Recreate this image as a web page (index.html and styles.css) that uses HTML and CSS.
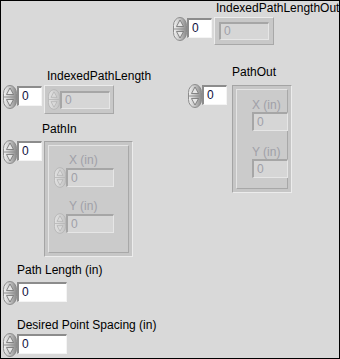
FILE: index.html
```html
<!DOCTYPE html>
<html lang="en">
<head>
  <meta charset="UTF-8">
  <title>Path Panel</title>
  <link rel="stylesheet" href="styles.css">
</head>
<body>

  <!-- Front panel canvas: each control sits where it was dropped -->
  <div class="panel">

    <!-- IndexedPathLengthOut (indicator array) -->
    <div class="ctl ctl-out-len">
      <div class="label">IndexedPathLengthOut</div>
      <div class="row">
        <svg class="spin" viewBox="0 0 14 24"><use href="#spin"/></svg>
        <div class="num idx">0</div>
        <div class="array arr-out-len">
          <div class="field dim">0</div>
        </div>
      </div>
    </div>

    <!-- IndexedPathLength (control array) -->
    <div class="ctl ctl-in-len">
      <div class="label">IndexedPathLength</div>
      <div class="row">
        <svg class="spin" viewBox="0 0 14 24"><use href="#spin"/></svg>
        <div class="num idx">0</div>
        <div class="array arr-in-len">
          <svg class="spin small dim-spin" viewBox="0 0 14 24"><use href="#spin-dim"/></svg>
          <div class="field dim">0</div>
        </div>
      </div>
    </div>

    <!-- PathOut (indicator cluster array) -->
    <div class="ctl ctl-path-out">
      <div class="label">PathOut</div>
      <div class="row">
        <svg class="spin" viewBox="0 0 14 24"><use href="#spin"/></svg>
        <div class="num idx">0</div>
        <div class="cluster clu-out">
          <div class="inner">
            <div class="sub-label">X (in)</div>
            <div class="field dim">0</div>
            <div class="sub-label">Y (in)</div>
            <div class="field dim">0</div>
          </div>
        </div>
      </div>
    </div>

    <!-- PathIn (control cluster array) -->
    <div class="ctl ctl-path-in">
      <div class="label">PathIn</div>
      <div class="row">
        <svg class="spin" viewBox="0 0 14 24"><use href="#spin"/></svg>
        <div class="num idx">0</div>
        <div class="cluster clu-in">
          <div class="inner">
            <div class="sub-label">X (in)</div>
            <div class="sub-row">
              <svg class="spin small dim-spin" viewBox="0 0 14 24"><use href="#spin-dim"/></svg>
              <div class="field dim">0</div>
            </div>
            <div class="sub-label">Y (in)</div>
            <div class="sub-row">
              <svg class="spin small dim-spin" viewBox="0 0 14 24"><use href="#spin-dim"/></svg>
              <div class="field dim">0</div>
            </div>
          </div>
        </div>
      </div>
    </div>

    <!-- Path Length (in) -->
    <div class="ctl ctl-len">
      <div class="label">Path Length (in)</div>
      <div class="row">
        <svg class="spin" viewBox="0 0 14 24"><use href="#spin"/></svg>
        <div class="num wide">0</div>
      </div>
    </div>

    <!-- Desired Point Spacing (in) -->
    <div class="ctl ctl-spacing">
      <div class="label">Desired Point Spacing (in)</div>
      <div class="row">
        <svg class="spin" viewBox="0 0 14 24"><use href="#spin"/></svg>
        <div class="num wide">0</div>
      </div>
    </div>

  </div>

  <!-- Shared spinner drawings -->
  <svg class="defs" width="0" height="0">
    <defs>
      <linearGradient id="knob" x1="0" y1="0" x2="1" y2="0">
        <stop offset="0" stop-color="#f2f2f2"/>
        <stop offset="0.45" stop-color="#c8c8c8"/>
        <stop offset="1" stop-color="#8a8a8a"/>
      </linearGradient>
      <linearGradient id="knob-dim" x1="0" y1="0" x2="1" y2="0">
        <stop offset="0" stop-color="#e2e2e2"/>
        <stop offset="1" stop-color="#c4c4c4"/>
      </linearGradient>
      <g id="spin">
        <rect x="0.5" y="0.5" width="13" height="23" rx="6.5" ry="8" fill="url(#knob)" stroke="#8c8c8c"/>
        <line x1="1" y1="12" x2="13" y2="12" stroke="#909090"/>
        <path d="M7 3 L10.5 9.5 H3.5 Z" fill="#e6e6e6" stroke="#6e6e6e" stroke-width="0.8"/>
        <path d="M7 21 L10.5 14.5 H3.5 Z" fill="#e6e6e6" stroke="#6e6e6e" stroke-width="0.8"/>
      </g>
      <g id="spin-dim">
        <rect x="0.5" y="0.5" width="13" height="23" rx="6.5" ry="8" fill="url(#knob-dim)" stroke="#b4b4b4"/>
        <line x1="1" y1="12" x2="13" y2="12" stroke="#b8b8b8"/>
        <path d="M7 3 L10.5 9.5 H3.5 Z" fill="#dadada" stroke="#b0b0b0" stroke-width="0.8"/>
        <path d="M7 21 L10.5 14.5 H3.5 Z" fill="#dadada" stroke="#b0b0b0" stroke-width="0.8"/>
      </g>
    </defs>
  </svg>

</body>
</html>
```

FILE: styles.css
```css
/* Page reset */
body {
  margin: 0;
  padding: 0;
}

/* Front panel: grey canvas with a thin dark frame */
.panel {
  position: relative;
  width: 340px;
  height: 359px;
  background-color: #d9d9d9;
  box-shadow: inset 0 0 0 1px #000;
  font-family: "Liberation Sans", Arial, sans-serif;
  font-size: 12px;
  color: #000;
  overflow: hidden;
}

.defs {
  position: absolute;
  width: 0;
  height: 0;
}

/* Each control is placed on the panel canvas */
.ctl {
  position: absolute;
  display: flex;
  flex-direction: column;
}
.ctl-out-len  { left: 173px; top: 1px;   }
.ctl-in-len   { left: 3px;   top: 69px;  }
.ctl-path-out { left: 188px; top: 65px;  }
.ctl-path-in  { left: 3px;   top: 122px; }
.ctl-len      { left: 3px;   top: 263px; }
.ctl-spacing  { left: 3px;   top: 318px; }

/* Owned labels */
.label {
  height: 16px;
  line-height: 14px;
  white-space: nowrap;
}
.ctl-out-len  .label { padding-left: 43px; }
.ctl-in-len   .label { padding-left: 44px; }
.ctl-path-out .label { padding-left: 44px; height: 19px; }
.ctl-path-in  .label { padding-left: 39px; height: 18px; }
.ctl-len      .label { padding-left: 14px; height: 18px; }
.ctl-spacing  .label { padding-left: 14px; height: 15px; }

.row {
  display: flex;
  align-items: flex-start;
}

/* Increment / decrement knob */
.spin {
  width: 14px;
  height: 24px;
  flex: none;
}
.spin.small {
  width: 12px;
  height: 23px;
}

/* White numeric entry */
.num {
  box-sizing: border-box;
  height: 20px;
  margin-top: 1px;
  padding-left: 3px;
  line-height: 17px;
  background: #fff;
  border-top: 2px solid #8c8c8c;
  border-left: 2px solid #8c8c8c;
  border-right: 1px solid #f4f4f4;
  border-bottom: 1px solid #f4f4f4;
  color: #101040;
}
.num.idx  { width: 25px; }
.num.wide { width: 50px; }

/* Disabled element inside arrays and clusters */
.field {
  box-sizing: border-box;
  background: #d6d6d6;
  border-top: 2px solid #a6a6a6;
  border-left: 2px solid #a6a6a6;
  border-right: 1px solid #e6e6e6;
  border-bottom: 1px solid #e6e6e6;
  padding-left: 3px;
  line-height: 15px;
}
.dim {
  color: #a0a0a8;
}

/* Array frames */
.array {
  box-sizing: border-box;
  display: flex;
  align-items: center;
  margin-left: 2px;
  background: #c8c8c8;
  border-top: 1px solid #ececec;
  border-left: 1px solid #ececec;
  border-right: 1px solid #a8a8a8;
  border-bottom: 1px solid #a8a8a8;
}
.arr-out-len {
  width: 60px;
  height: 28px;
  padding: 0 4px;
}
.arr-out-len .field {
  width: 50px;
  height: 18px;
}
.arr-in-len {
  width: 70px;
  height: 29px;
  margin-left: 2px;
  padding-left: 3px;
}
.arr-in-len .field {
  width: 50px;
  height: 18px;
}

/* Cluster frames */
.cluster {
  box-sizing: border-box;
  margin-left: 5px;
  margin-top: 1px;
  padding: 3px;
  background: #c6c6c6;
  border-top: 1px solid #a4a4a4;
  border-left: 1px solid #a4a4a4;
  border-right: 1px solid #ececec;
  border-bottom: 1px solid #ececec;
}
.cluster .inner {
  box-sizing: border-box;
  height: 100%;
  background: #cbcbcb;
  border-top: 1px solid #e4e4e4;
  border-left: 1px solid #e4e4e4;
  border-right: 1px solid #a8a8a8;
  border-bottom: 1px solid #a8a8a8;
  display: flex;
  flex-direction: column;
}
.clu-out {
  width: 60px;
  height: 108px;
}
.clu-out .inner {
  padding: 8px 0 0 15px;
}
.clu-out .sub-label { height: 16px; line-height: 14px; padding-left: 0; }
.clu-out .field {
  width: 36px;
  height: 19px;
  line-height: 16px;
  margin-bottom: 14px;
}

.clu-in {
  width: 89px;
  height: 116px;
  margin-left: 2px;
}
.clu-in .inner {
  padding: 7px 0 0 5px;
}
.clu-in .sub-label {
  padding-left: 15px;
  height: 13px;
  line-height: 14px;
}
.clu-in .sub-row {
  display: flex;
  align-items: center;
  margin-bottom: 10px;
}
.clu-in .field {
  width: 48px;
  height: 19px;
  line-height: 16px;
}

.sub-label {
  color: #a0a0a8;
  white-space: nowrap;
}
```
